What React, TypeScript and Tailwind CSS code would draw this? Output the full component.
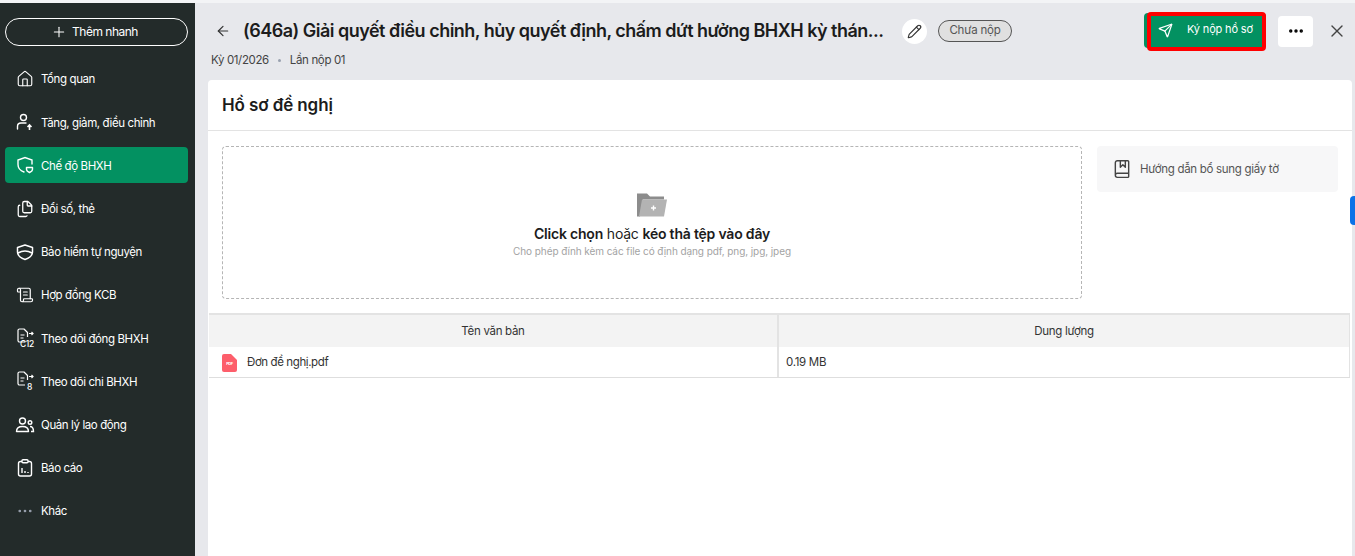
import { ArrowLeft, Ellipsis, House, Pencil, Plus, Send, X, Files, BookMarked, ScrollText } from "lucide-react";
import type { ReactNode } from "react";

const iconClass = "h-[18px] w-[18px] text-white";

function ShieldHeart() {
  return (
    <svg viewBox="0 0 20 20" fill="none" stroke="currentColor" strokeWidth="1.4" className="h-5 w-5 text-white">
      <path d="M17 9V5l-7-2.500L3 5v4.500c0 3.600 2.600 6.300 6 7.500" strokeLinecap="round" />
      <path d="M11.500 12.500h6v1.700c0 1.500-1.300 2.500-3 3.300-1.700-.8-3-1.800-3-3.300z" strokeLinejoin="round" />
    </svg>
  );
}

function ShieldBand() {
  return (
    <svg viewBox="0 0 20 20" fill="none" stroke="currentColor" strokeWidth="1.5" className="h-5 w-5 text-white">
      <path d="M2.500 5.500 10 3l7.500 2.500v4.500c0 3.500-3.200 6-7.500 7.500-4.300-1.500-7.500-4-7.500-7.500z" strokeLinejoin="round" />
      <path d="M3 11c4.200-2.500 9.800-2.500 14 0" />
    </svg>
  );
}

function UserArrow() {
  return (
    <svg viewBox="0 0 20 20" fill="none" stroke="currentColor" strokeWidth="1.4" className="h-5 w-5 text-white">
      <circle cx="8.500" cy="5.500" r="3" />
      <path d="M2.500 17v-2.500c0-2 1.500-3.500 3.500-3.500h5" strokeLinecap="round" />
      <path d="M14.500 18v-5M12.500 15l2-2 2 2" strokeWidth="1.600" />
    </svg>
  );
}

function People() {
  return (
    <svg viewBox="0 0 20 20" fill="none" stroke="currentColor" strokeWidth="1.4" className="h-5 w-5 text-white">
      <circle cx="7.500" cy="6" r="3" />
      <path d="M1.500 16.500c0-3.300 2.700-5 6-5s6 1.700 6 5z" strokeLinejoin="round" />
      <circle cx="15" cy="7.500" r="1.800" />
      <path d="M15 11.500c2 0 3.500 1.500 3.500 5h-2.500" />
    </svg>
  );
}

function Report() {
  return (
    <svg viewBox="0 0 20 20" fill="none" stroke="currentColor" strokeWidth="1.4" className="h-5 w-5 text-white">
      <rect x="3.500" y="3.500" width="13" height="14.500" rx="2" />
      <rect x="7" y="1.800" width="6" height="3" rx="1" fill="#232b2a" />
      <path d="M7 15v-5M10 15v-2M13 15v-1" />
    </svg>
  );
}

function DocArrow({ label }: { label: string }) {
  return (
    <svg viewBox="0 0 20 20" fill="none" stroke="currentColor" strokeWidth="1.2" className="h-5 w-5 overflow-visible text-white">
      <path d="M10 14H4.500A1.500 1.500 0 0 1 3 12.500v-10A1.500 1.500 0 0 1 4.500 1H9l3.500 3.500V9" strokeLinejoin="round" />
      <path d="M5.500 7h4M5.500 10h3M14 5.500h4M16.500 4l1.500 1.500L16.500 7" />
      <text x={label === "C12" ? 5 : 12} y="19" fontSize="8.500" fontWeight="500" fill="currentColor" stroke="none" fontFamily="Inter, sans-serif">{label}</text>
    </svg>
  );
}

const menu: { label: string; icon: ReactNode; active?: boolean }[] = [
  { label: "Tổng quan", icon: <House className={iconClass} strokeWidth={1.5} /> },
  { label: "Tăng, giảm, điều chỉnh", icon: <UserArrow /> },
  { label: "Chế độ BHXH", icon: <ShieldHeart />, active: true },
  { label: "Đổi số, thẻ", icon: <Files className={iconClass} strokeWidth={1.7} /> },
  { label: "Bảo hiểm tự nguyện", icon: <ShieldBand /> },
  { label: "Hợp đồng KCB", icon: <ScrollText className={iconClass} strokeWidth={1.6} /> },
  { label: "Theo dõi đóng BHXH", icon: <DocArrow label="C12" /> },
  { label: "Theo dõi chi BHXH", icon: <DocArrow label="8" /> },
  { label: "Quản lý lao động", icon: <People /> },
  { label: "Báo cáo", icon: <Report /> },
  { label: "Khác", icon: <Ellipsis className="h-[18px] w-[18px] text-gray-400" strokeWidth={1.6} /> },
];

function Sidebar() {
  return (
    <aside className="flex w-[195px] shrink-0 flex-col bg-[#232b2a] px-[5px] pt-[15px] text-white">
      <button className="flex h-[28px] w-[183px] items-center justify-center gap-[5px] rounded-full border border-white pr-[4px] text-xs tracking-[-0.5px]">
        <Plus className="h-[16px] w-[16px]" strokeWidth={1.6} />
        <span className="mb-[1px]">Thêm nhanh</span>
      </button>
      <nav className="mt-[15px] flex w-[183px] flex-col gap-[7.2px]">
        {menu.map((item) => (
          <div
            key={item.label}
            className={`flex h-[36px] items-center gap-[6px] rounded pl-[10px] text-[11.5px] tracking-[-0.4px] ${item.active ? "bg-[#039161]" : ""}`}
          >
            <span className="flex w-[20px] justify-center">{item.icon}</span>
            <span className="pt-[2px]">{item.label}</span>
          </div>
        ))}
      </nav>
    </aside>
  );
}

function Header() {
  return (
    <header className="flex h-[77px] shrink-0 flex-col pl-[3px] pt-[9px]">
      <div className="flex h-[38px] items-center">
        <ArrowLeft className="ml-[4px] h-[16px] w-[16px] text-[#333]" strokeWidth={1.8} />
        <h1 className="ml-[12px] w-[642px] whitespace-nowrap text-lg font-semibold tracking-[-0.51px] text-[#1c1c1c]">
          (646a) Giải quyết điều chỉnh, hủy quyết định, chấm dứt hưởng BHXH kỳ thán...
        </h1>
        <span className="ml-[17px] flex h-[25px] w-[25px] items-center justify-center rounded-full bg-white">
          <Pencil className="h-[15px] w-[15px] text-[#333]" strokeWidth={1.8} />
        </span>
        <span className="ml-[11px] flex h-[22px] w-[74px] items-center justify-center rounded-full border border-[#555] bg-[#e0e0e0] text-[11.5px] tracking-[-0.2px] text-[#555]">
          Chưa nộp
        </span>
        <div className="relative ml-[132px] mt-[-2px] flex h-[35px] w-[122px] items-center rounded bg-[#039161] pl-[14px] text-[11px] tracking-[-0.15px] text-white">
          <Send className="h-[15px] w-[15px]" strokeWidth={2} />
          <span className="ml-[14px] mb-[2px]">Ký nộp hồ sơ</span>
          <div className="absolute -bottom-[3px] left-[3px] right-0 -top-[1px] rounded border-[4px] border-[#f00]" />
        </div>
        <button className="ml-[12px] flex h-[31px] w-[35px] items-center justify-center rounded bg-white">
          <Ellipsis className="h-[18px] w-[18px] text-black" strokeWidth={2.6} />
        </button>
        <X className="ml-[14px] h-[20px] w-[20px] text-[#444]" strokeWidth={1.6} />
      </div>
      <div className="mt-[2px] flex items-center text-[11.5px] tracking-[-0.36px] text-[#444]">
        <span>Kỳ 01/2026</span>
        <span className="mx-[9px] h-[3px] w-[3px] rounded-full bg-gray-400" />
        <span>Lần nộp 01</span>
      </div>
    </header>
  );
}

function UploadArea() {
  return (
    <div className="flex gap-[15px] px-[14px] pb-[14px] pt-[15px]">
      <div className="flex h-[153px] w-[860px] flex-col items-center rounded border border-dashed border-[#b5b5b5] pt-[45px]">
        <svg viewBox="0 0 32 24" className="h-[25px] w-[32px]">
          <path d="M1 1h10l3 3h14v3H7l-3 17H1z" fill="#8c8c8c" />
          <path d="M6 7h25l-3 17H3z" fill="#b3b3b3" />
          <path d="M15 15.500h5M17.500 13v5" stroke="#fff" strokeWidth="1.400" />
        </svg>
        <p className="mt-[7px] text-sm leading-[20px] tracking-[-0.2px] text-[#1c1c1c]">
          <span className="font-semibold">Click chọn</span> hoặc <span className="font-semibold">kéo thả tệp vào đây</span>
        </p>
        <p className="text-[10px] leading-[14px] tracking-[-0.08px] text-[#a3a3a3]">Cho phép đính kèm các file có định dạng pdf, png, jpg, jpeg</p>
      </div>
      <div className="flex h-[46px] w-[241px] items-center gap-[8px] rounded bg-[#f7f7f8] pl-[15px] text-[11.5px] tracking-[-0.3px] text-[#555]">
        <BookMarked className="h-[20px] w-[20px] text-[#444]" strokeWidth={1.7} />
        <span className="pt-[1px]">Hướng dẫn bổ sung giấy tờ</span>
      </div>
    </div>
  );
}

function FileTable() {
  return (
    <div className="ml-[1px] mr-[2px] border-t-2 border-[#e3e3e3] text-[11.5px] text-[#333]">
      <div className="grid h-[32px] grid-cols-[570px_1fr] items-center bg-[#f3f3f3] text-center tracking-[-0.3px]">
        <div className="flex h-full items-center justify-center border-r-2 border-[#e3e3e3] pt-[2px]">Tên văn bản</div>
        <div className="flex h-full items-center justify-center border-r border-[#e3e3e3] pt-[2px]">Dung lượng</div>
      </div>
      <div className="grid h-[31px] grid-cols-[570px_1fr] border-b border-[#dedede]">
        <div className="flex items-center border-r-2 border-[#e3e3e3] pl-[13px] pt-[1px] tracking-[-0.4px]">
          <svg viewBox="0 0 15 18" className="h-[18px] w-[15px]">
            <path d="M2 0h7l6 6v10a2 2 0 0 1-2 2H2a2 2 0 0 1-2-2V2a2 2 0 0 1 2-2z" fill="#fd5e6b" />
            <text x="7.500" y="11" fontSize="4" fontWeight="700" textAnchor="middle" fill="#fff" fontFamily="Inter, sans-serif">PDF</text>
          </svg>
          <span className="ml-[10px]">Đơn đề nghị.pdf</span>
        </div>
        <div className="flex items-center border-r border-[#e3e3e3] pl-[7px] pt-[1px] tracking-[-0.3px]">0.19 MB</div>
      </div>
    </div>
  );
}

export default function App() {
  return (
    <div className="relative flex h-[556px] w-[1355px] overflow-hidden border-t-[3px] border-[#f3f4f6] bg-[#e7e8ec] font-['Inter',sans-serif]">
      <Sidebar />
      <main className="ml-[13px] flex w-[1144px] flex-col">
        <Header />
        <section className="flex flex-1 flex-col rounded-t bg-white">
          <h2 className="flex h-[51px] shrink-0 items-center border-b border-[#e3e3e3] pl-[14px] pt-[2px] text-[17px] font-semibold tracking-[-0.1px] text-[#1c1c1c]">
            Hồ sơ đề nghị
          </h2>
          <UploadArea />
          <FileTable />
        </section>
      </main>
      <div className="absolute right-0 top-[193px] h-[29px] w-[5px] rounded-l bg-[#0b72e7]" />
    </div>
  );
}
